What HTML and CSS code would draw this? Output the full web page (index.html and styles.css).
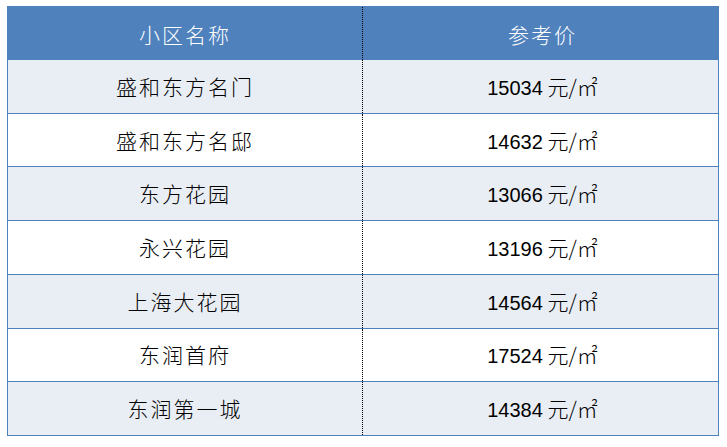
FILE: index.html
```html
<!DOCTYPE html>
<html lang="zh-CN">
<head>
<meta charset="utf-8">
<title>小区参考价</title>
<link rel="stylesheet" href="styles.css">
</head>
<body>
<div class="table">
  <div class="row head">
    <div class="cell name">小区名称</div>
    <div class="cell price">参考价</div>
  </div>
  <div class="body">
    <div class="row band">
      <div class="cell name">盛和东方名门</div>
      <div class="cell price"><span class="val"><span class="num">15034</span> 元/㎡</span></div>
    </div>
    <div class="row">
      <div class="cell name">盛和东方名邸</div>
      <div class="cell price"><span class="val"><span class="num">14632</span> 元/㎡</span></div>
    </div>
    <div class="row band">
      <div class="cell name">东方花园</div>
      <div class="cell price"><span class="val"><span class="num">13066</span> 元/㎡</span></div>
    </div>
    <div class="row">
      <div class="cell name">永兴花园</div>
      <div class="cell price"><span class="val"><span class="num">13196</span> 元/㎡</span></div>
    </div>
    <div class="row band">
      <div class="cell name">上海大花园</div>
      <div class="cell price"><span class="val"><span class="num">14564</span> 元/㎡</span></div>
    </div>
    <div class="row">
      <div class="cell name">东润首府</div>
      <div class="cell price"><span class="val"><span class="num">17524</span> 元/㎡</span></div>
    </div>
    <div class="row band last">
      <div class="cell name">东润第一城</div>
      <div class="cell price"><span class="val"><span class="num">14384</span> 元/㎡</span></div>
    </div>
  </div>
</div>
</body>
</html>
```
FILE: styles.css
```css
html, body {
  margin: 0;
  padding: 0;
  background: #ffffff;
}
body {
  padding: 6px 0 0 7px;
  font-family: "Noto Sans CJK SC", "Noto Sans", sans-serif;
  color: #000000;
}
.table {
  box-sizing: border-box;
  width: 712px;
  height: 430px;
  border: 1px solid #4f81bd;
  display: flex;
  flex-direction: column;
}
.row {
  display: grid;
  grid-template-columns: 355px 1fr;
  background: #ffffff;
}
.head {
  height: 53px;
  flex: none;
  background: #4f81bd;
  color: #ffffff;
}
.body {
  flex: 1;
  display: flex;
  flex-direction: column;
}
.body .row {
  flex: 1;
  border-bottom: 1px solid #4f81bd;
}
.body .row.last {
  border-bottom: none;
}
.row.band {
  background: #e9edf4;
}
.cell {
  display: flex;
  align-items: center;
  justify-content: center;
  font-size: 21px;
  font-weight: 300;
  letter-spacing: 2px;
  line-height: 1;
}
.cell.name {
  box-sizing: border-box;
  border-right: 1px dotted #000000;
}
.cell.price {
  padding-top: 1px;
  padding-left: 4px;
}
.val {
  white-space: pre;
  letter-spacing: 0;
}
.head .cell {
  padding-top: 2px;
}
.num {
  font-family: "Liberation Sans", Arial, sans-serif;
  font-size: 20px;
  font-weight: 400;
  letter-spacing: 0;
}
```
